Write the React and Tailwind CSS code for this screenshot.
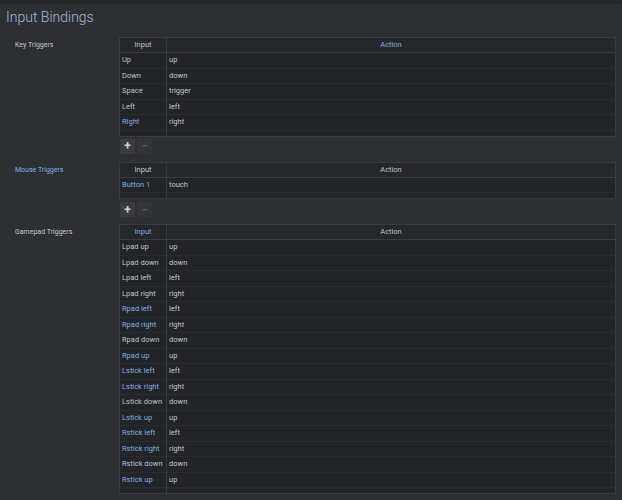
import React from "react";

const BLUE = "text-[#8aafdc]";
const GREY = "text-[#bcc3cc]";

const keyRows = [
  ["Up", "up"],
  ["Down", "down"],
  ["Space", "trigger"],
  ["Left", "left"],
  ["Right", "right", true],
];

const mouseRows = [["Button 1", "touch", true]];

const padRows = [
  ["Lpad up", "up"],
  ["Lpad down", "down"],
  ["Lpad left", "left"],
  ["Lpad right", "right"],
  ["Rpad left", "left", true],
  ["Rpad right", "right", true],
  ["Rpad down", "down"],
  ["Rpad up", "up", true],
  ["Lstick left", "left", true],
  ["Lstick right", "right", true],
  ["Lstick down", "down"],
  ["Lstick up", "up", true],
  ["Rstick left", "left", true],
  ["Rstick right", "right", true],
  ["Rstick down", "down"],
  ["Rstick up", "up", true],
];

function BindingTable({ rows, inputBlue, actionBlue }) {
  return (
    <div className="flex-1 border border-[#393b40] bg-[#222428]">
      <div className="flex h-[15px] bg-[#25272b] border-b border-[#3a3c41] text-[7.5px]">
        <div className={`w-[47px] shrink-0 border-r border-[#383a3f] flex items-center justify-center ${inputBlue ? BLUE : GREY}`}>
          Input
        </div>
        <div className={`flex-1 flex items-center justify-center ${actionBlue ? BLUE : GREY}`}>
          Action
        </div>
      </div>
      <div className="flex">
        <div className="w-[47px] shrink-0 border-r border-[#383a3f] pb-[5px]">
          {rows.map(([input, , blue]) => (
            <div
              key={input}
              className={`h-[15.5px] flex items-center pl-[2px] pb-[1px] border-b border-[#2a2c31] text-[7.5px] ${blue ? BLUE : GREY}`}
            >
              {input}
            </div>
          ))}
        </div>
        <div className="flex-1 pb-[5px]">
          {rows.map(([input, action]) => (
            <div
              key={input}
              className="h-[15.5px] flex items-center pl-[2px] pb-[1px] border-b border-[#2a2c31] text-[7.5px] text-[#c3c7cc]"
            >
              {action}
            </div>
          ))}
        </div>
      </div>
    </div>
  );
}

function AddRemove() {
  return (
    <div className="flex gap-[2px] pl-[120px]">
      <div className="w-[15px] h-[15px] bg-[#3b3c41] flex items-center justify-center text-[#cdd1d6] text-[12px] font-bold leading-none">
        +
      </div>
      <div className="w-[15px] h-[15px] bg-[#34353a] flex items-center justify-center text-[#55575d] text-[12px] font-bold leading-none">
        −
      </div>
    </div>
  );
}

function Section({ label, labelBlue, children }) {
  return (
    <div className="flex pr-[6px]">
      <div className={`w-[119px] shrink-0 pl-[15px] pt-[3px] text-[7px] ${labelBlue ? BLUE : "text-[#c3cad3]"}`}>
        {label}
      </div>
      {children}
    </div>
  );
}

export default function App() {
  return (
    <div
      className="w-[622px] h-[500px] bg-[#2e2f33] overflow-hidden"
      style={{ fontFamily: "Roboto, 'Noto Sans', sans-serif" }}
    >
      <div className="h-[4px] bg-[#26272a]" />
      <h1 className="pl-[6px] pt-[3px] h-[33px] text-[14px] font-light text-[#a6bcd4] leading-[20px]">
        Input Bindings
      </h1>

      <Section label="Key Triggers">
        <BindingTable rows={keyRows} actionBlue />
      </Section>
      <div className="mt-[2px] mb-[8px]">
        <AddRemove />
      </div>

      <Section label="Mouse Triggers" labelBlue>
        <BindingTable rows={mouseRows} />
      </Section>
      <div className="mt-[3px] mb-[7px]">
        <AddRemove />
      </div>

      <Section label="Gamepad Triggers">
        <BindingTable rows={padRows} inputBlue />
      </Section>
    </div>
  );
}
